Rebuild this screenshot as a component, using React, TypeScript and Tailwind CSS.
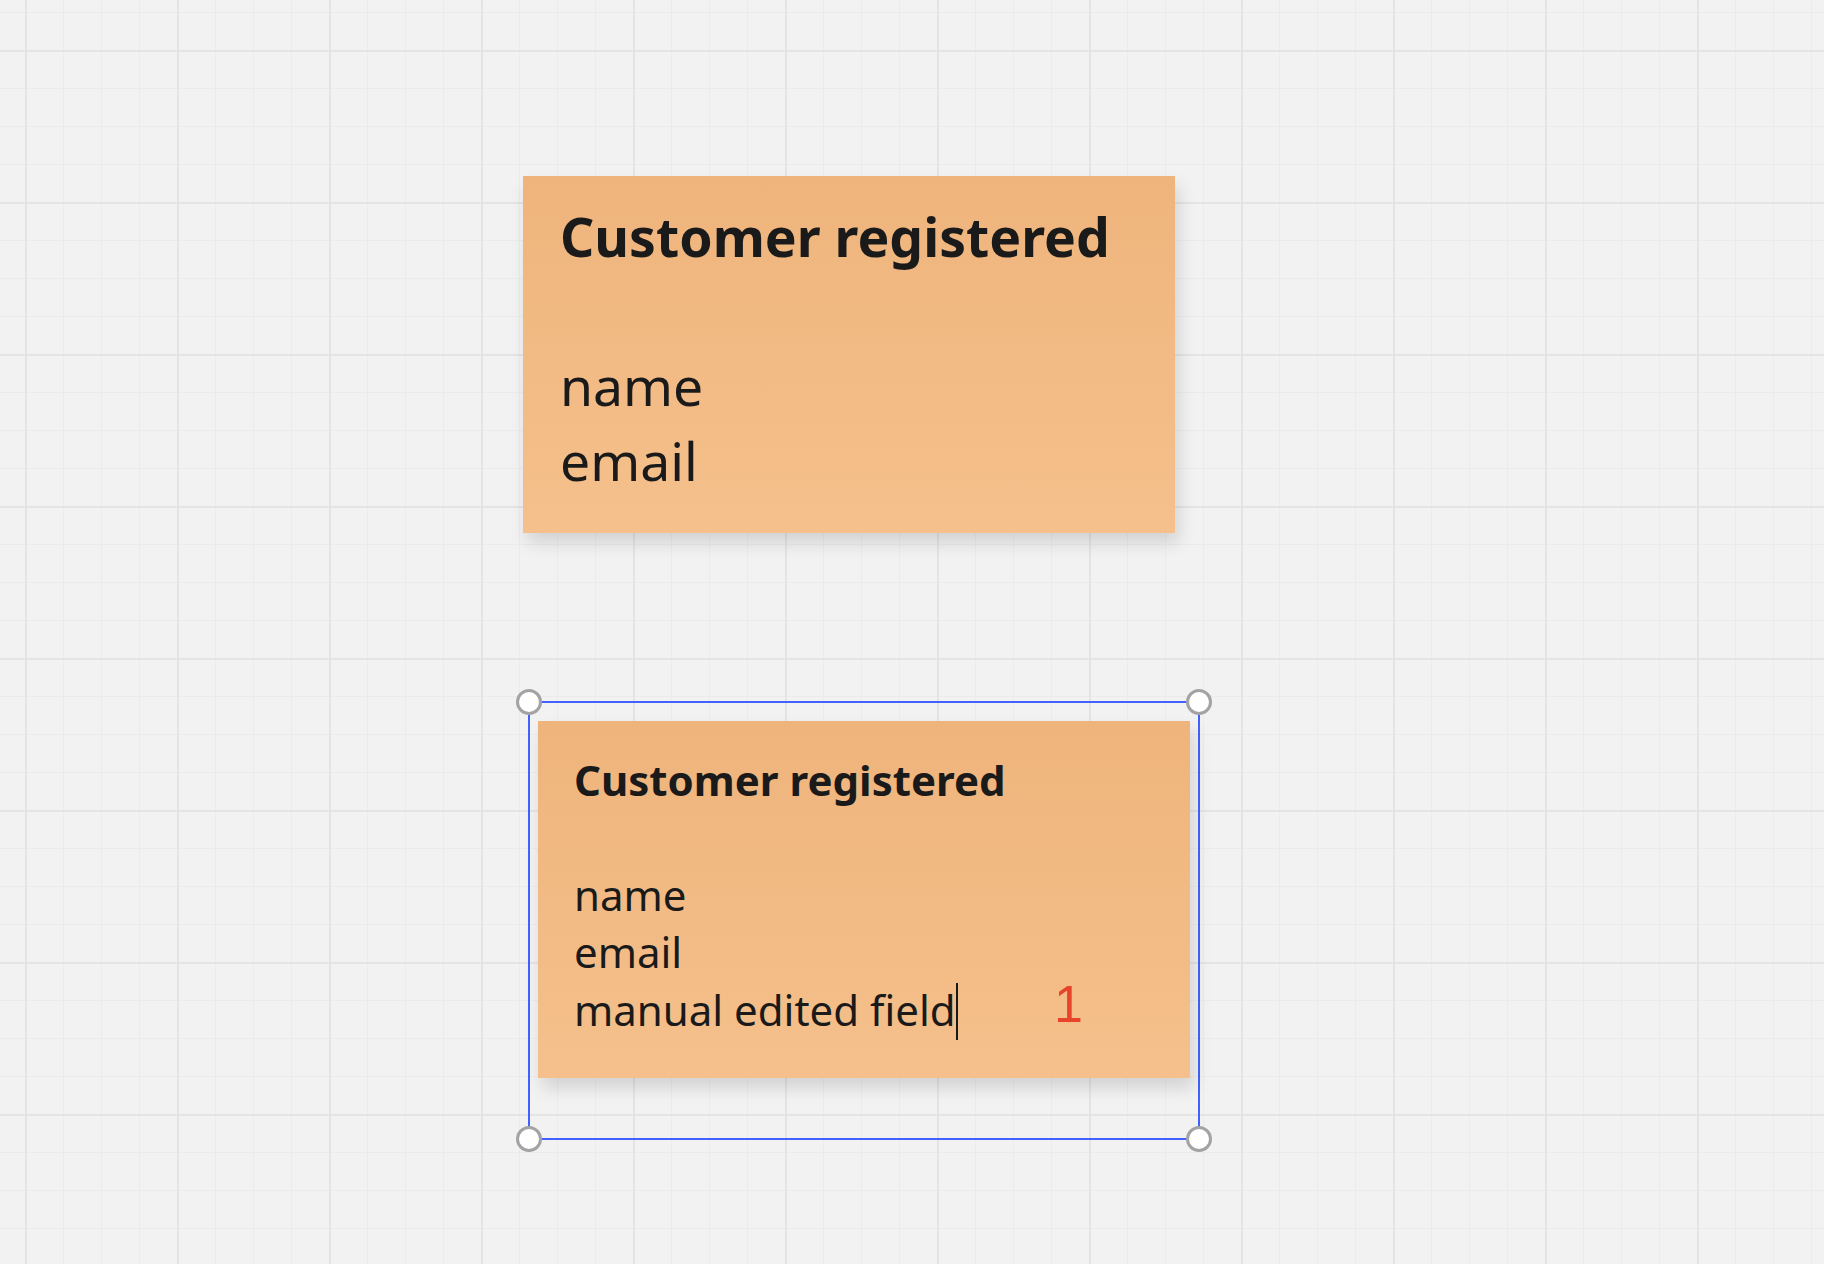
const gridBg =
  "bg-[#f2f2f2] [background-image:linear-gradient(to_right,#e4e4e4_2px,transparent_2px),linear-gradient(to_bottom,#e4e4e4_2px,transparent_2px),linear-gradient(to_right,#ebebeb_1px,transparent_1px),linear-gradient(to_bottom,#ebebeb_1px,transparent_1px)] [background-size:152px_152px,152px_152px,38px_38px,38px_38px] [background-position:25px_50px,25px_50px,25px_50px,25px_50px]";

const sticky =
  "absolute w-[652px] h-[357px] bg-gradient-to-b from-[#efb47c] to-[#f5c08c] shadow-[4px_10px_16px_rgba(0,0,0,0.13)] font-['Noto_Sans',sans-serif] text-[#1a1a1a]";

function Handle({ className }: { className: string }) {
  return (
    <div
      className={`absolute w-[26px] h-[26px] rounded-full bg-white border-[3px] border-[#a3a3a3] ${className}`}
    />
  );
}

export default function App() {
  return (
    <div className={`relative w-[1824px] h-[1264px] overflow-hidden ${gridBg}`}>
      {/* first sticky */}
      <div className={`${sticky} left-[523px] top-[176px] pl-[37px] pt-[24px] text-[53.5px] leading-[74.5px]`}>
        <div className="font-bold">Customer registered</div>
        <div>&nbsp;</div>
        <div>name</div>
        <div>email</div>
      </div>

      {/* selection frame with corner handles */}
      <div className="absolute left-[528px] top-[701px] w-[672px] h-[439px] border-2 border-[#4262ff]">
        <Handle className="-left-[14px] -top-[14px]" />
        <Handle className="-right-[14px] -top-[14px]" />
        <Handle className="-left-[14px] -bottom-[14px]" />
        <Handle className="-right-[14px] -bottom-[14px]" />
      </div>

      {/* second sticky, being edited */}
      <div className={`${sticky} left-[538px] top-[721px] pl-[36px] pt-[30px] text-[42px] leading-[57.4px]`}>
        <div className="font-bold">Customer registered</div>
        <div>&nbsp;</div>
        <div>name</div>
        <div>email</div>
        <div>
          manual edited field
          <span className="inline-block w-[2px] h-[57px] bg-[#1a1a1a] align-[-14px]" />
        </div>
      </div>

      <span className="absolute left-[1054px] top-[978px] font-['Liberation_Sans',Arial,sans-serif] text-[52px] leading-none text-[#e8442c]">
        1
      </span>
    </div>
  );
}
